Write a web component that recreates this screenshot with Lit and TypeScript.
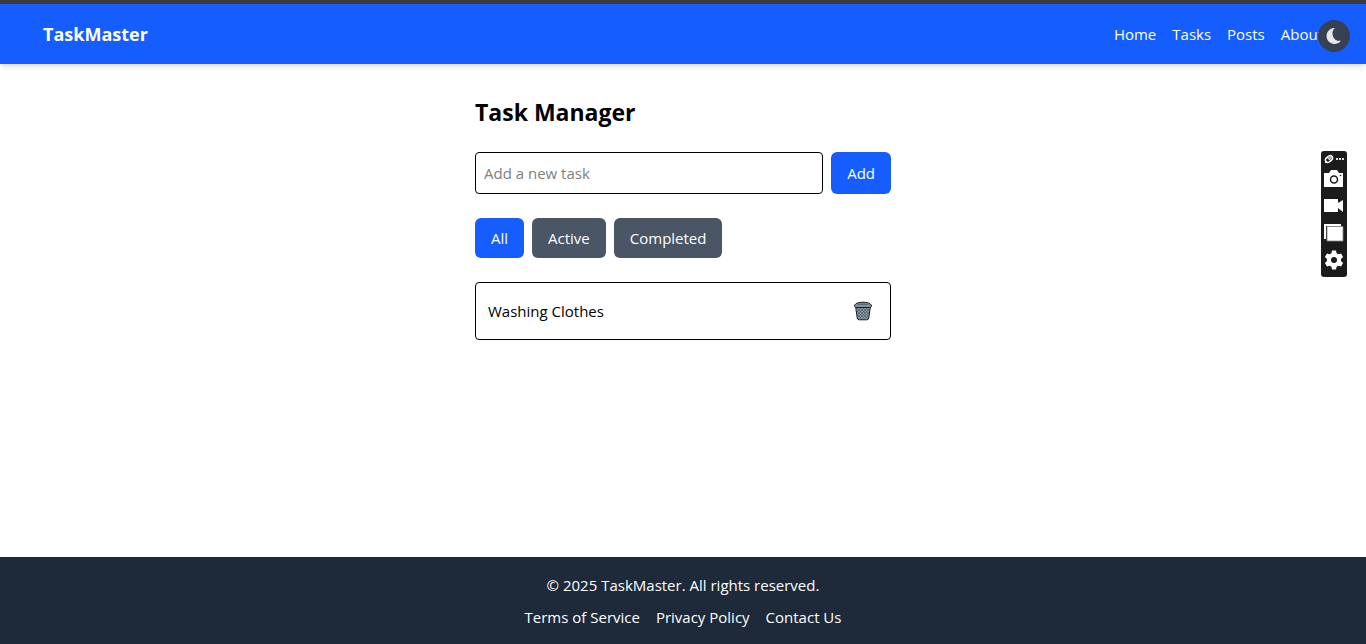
import { LitElement, html, css, svg } from "lit";
import { customElement, state } from "lit/decorators.js";

type Filter = "All" | "Active" | "Completed";
interface Task { id: number; title: string; done: boolean; }

@customElement("capture-toolbar")
class CaptureToolbar extends LitElement {
  static styles = css`
    :host { display: block; }
    .bar { box-sizing: border-box; width: 26px; padding: 3px 2px 6px; border-radius: 3px; background: #1b1b1b; display: flex; flex-direction: column; align-items: center; gap: 5px; }
    .top { display: flex; width: 22px; height: 9px; }
    button { display: block; border: 0; padding: 0; background: none; cursor: pointer; width: 22px; height: 22px; }
    svg { display: block; }
  `;
  render() {
    const tools = [
      { label: "Take screenshot", art: svg`<path fill="#fff" d="M2 5h4l2-3h6l2 3h4v14H1V5z"/><circle cx="11" cy="11.500" r="3.500" fill="#fff" stroke="#1b1b1b" stroke-width="1.500"/><circle cx="17.500" cy="7.500" r=".8" fill="#1b1b1b"/>` },
      { label: "Record video", art: svg`<path fill="#fff" d="M1 4h14v4l5-3v12l-5-4v4H1z"/>` },
      { label: "Captured files", art: svg`<path fill="#fff" d="M1 2h17v2H3v13H1z"/><path fill="#fff" stroke="#888" stroke-width=".8" d="M4 4.500h16V19H4z"/>` },
      { label: "Settings", art: svg`<path fill="#fff" fill-rule="evenodd" d="M9 1.500h4l.6 2.800 1.700 1L18 4.500l2.100 3.500-2.100 2v2l2.100 2-2.100 3.500-2.700-.8-1.700 1-.6 2.800H9l-.6-2.800-1.700-1-2.700.8L1.900 14 4 12v-2L1.900 8 4 4.500l2.700.8 1.700-1zM11 8a3 3 0 1 0 0 6 3 3 0 0 0 0-6z"/>` },
    ];
    return html`<div class="bar" role="toolbar" aria-label="Capture tools">
      <div class="top"><svg width="22" height="10" viewBox="0 0 22 10">
        <g fill="none" stroke="#fff"><ellipse cx="6" cy="5" rx="4" ry="2.600" transform="rotate(-40 6 5)" stroke-width="1.500"/><circle cx="7" cy="4" r="1.200"/><path d="M2 9l2-2M4 3.500L8 7"/></g>
        <path d="M13 4h2v2h-2zM16 4h2v2h-2zM19 4h2v2h-2z" fill="#ddd"/></svg></div>
      ${tools.map(t => html`<button aria-label=${t.label}><svg width="22" height="22" viewBox="0 0 22 22">${t.art}</svg></button>`)}
    </div>`;
  }
}

@customElement("app-root")
class AppRoot extends LitElement {
  @state() filter: Filter = "All";
  @state() tasks: Task[] = [{ id: 1, title: "Washing Clothes", done: false }];

  static styles = css`
    :host { display: flex; flex-direction: column; min-height: 100vh; background: #fff; color: #000; font: 15px/24px "Open Sans", "Noto Sans", sans-serif; }
    * { box-sizing: border-box; }
    a { color: inherit; text-decoration: none; }
    button, input { font: inherit; }
    button { border: 0; cursor: pointer; }
    h1, p, ul { margin: 0; padding: 0; }
    svg { display: block; }
    header { border-top: 4px solid #3c3c3c; background: #155dfc; color: #fff; box-shadow: 0 4px 6px -1px rgb(0 0 0 / 0.1), 0 2px 4px -2px rgb(0 0 0 / 0.1); }
    .inner { max-width: 1280px; margin: 0 auto; padding: 16px 0; display: flex; justify-content: space-between; align-items: center; }
    .brand { font-size: 18px; line-height: 28px; font-weight: 700; }
    nav { display: flex; gap: 16px; }
    .theme { position: fixed; top: 20px; right: 16px; width: 32px; height: 32px; padding: 8px; border-radius: 50%; background: #364153; }
    .capture { position: fixed; top: 151px; right: 19px; }
    main { flex: 1; width: 100%; max-width: 448px; margin: 0 auto; padding: 32px 16px; }
    h1 { font-size: 23px; line-height: 32px; font-weight: 700; margin-bottom: 24px; }
    form { display: flex; gap: 8px; margin-bottom: 24px; }
    input { flex: 1; min-width: 0; padding: 8px; border: 1px solid #000; border-radius: 4px; background: #fff; color: #000; outline: none; }
    input::placeholder { color: #808080; opacity: 1; }
    .btn { padding: 8px 16px; border-radius: 6px; background: #4a5565; color: #fff; }
    .primary { background: #155dfc; }
    .filters { display: flex; gap: 8px; margin-bottom: 24px; }
    ul { list-style: none; display: grid; gap: 8px; }
    li { display: flex; align-items: center; justify-content: space-between; padding: 12px; border: 1px solid #000; border-radius: 4px; }
    .delete { padding: 6px 5px; background: none; }
    footer { background: #1e2939; color: #fff; padding: 16px 16px 15px; display: flex; flex-direction: column; align-items: center; gap: 8px; }
    .links { display: flex; gap: 16px; }
  `;

  private add(e: Event) {
    e.preventDefault();
    const input = this.renderRoot.querySelector("input") as HTMLInputElement;
    const title = input.value.trim();
    if (!title) return;
    this.tasks = [...this.tasks, { id: Date.now(), title, done: false }];
    input.value = "";
  }

  private trash() {
    return html`<svg width="20" height="20" viewBox="0 0 20 20" aria-hidden="true">
      <defs><pattern id="mesh" width="3" height="3" patternUnits="userSpaceOnUse"><path d="M0 0l3 3M3 0L0 3" stroke="#4e5d66" stroke-width=".7"/></pattern></defs>
      <path d="M2.500 4.500h15L15.800 17q-.3 1.800-2 1.800H6.200q-1.700 0-2-1.800z" fill="#8796a0" stroke="#171d20"/>
      <path d="M3.500 7h13L15 17.500H5z" fill="url(#mesh)"/>
      <path d="M2.500 6.500Q1 6 1.700 4 3.500 1.200 10 1.200T18.300 4q.7 2-.8 2.500z" fill="#84949e" stroke="#171d20"/>
      <path d="M3.500 4q2-1.400 6.500-1.400T16.500 4z" fill="#596972"/>
    </svg>`;
  }

  render() {
    const filters: Filter[] = ["All", "Active", "Completed"];
    const shown = this.tasks.filter(t => this.filter === "All" || t.done === (this.filter === "Completed"));
    return html`
      <header><div class="inner">
        <a class="brand" href="#">TaskMaster</a>
        <nav>${["Home", "Tasks", "Posts", "About"].map(n => html`<a href="#">${n}</a>`)}</nav>
      </div></header>
      <button class="theme" aria-label="Toggle dark mode"><svg width="16" height="16" viewBox="0 0 16 16"><path fill="#e5e7eb" d="M9 0A8 8 0 1 0 15 12.700Q9.500 13.500 7.400 9.200C5.600 5.500 6.500 2 9 0z"/></svg></button>
      <main>
        <h1>Task Manager</h1>
        <form @submit=${this.add}>
          <input type="text" aria-label="New task" placeholder="Add a new task" />
          <button class="btn primary" type="submit">Add</button>
        </form>
        <div class="filters">${filters.map(f => html`<button class="btn ${this.filter === f ? "primary" : ""}" @click=${() => (this.filter = f)}>${f}</button>`)}</div>
        <ul>${shown.map(t => html`<li><span>${t.title}</span>
          <button class="delete" aria-label="Delete task" @click=${() => (this.tasks = this.tasks.filter(x => x.id !== t.id))}>${this.trash()}</button></li>`)}</ul>
      </main>
      <footer>
        <p>© 2025 TaskMaster. All rights reserved.</p>
        <div class="links">${["Terms of Service", "Privacy Policy", "Contact Us"].map(n => html`<a href="#">${n}</a>`)}</div>
      </footer>
      <capture-toolbar class="capture"></capture-toolbar>`;
  }
}
